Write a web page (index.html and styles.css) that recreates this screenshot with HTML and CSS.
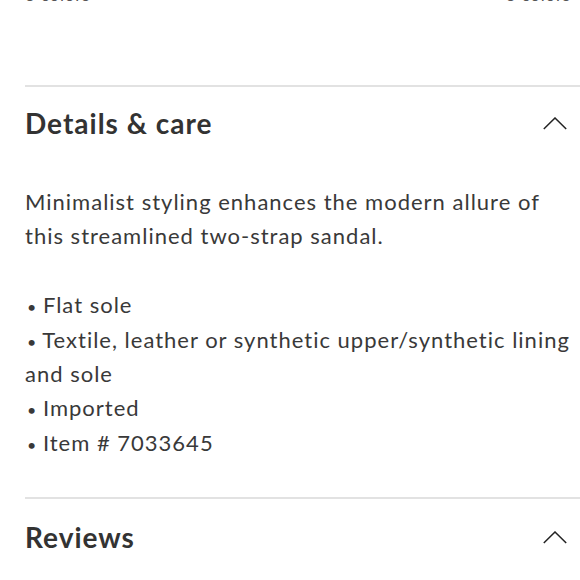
FILE: index.html
```html
<!DOCTYPE html>
<html lang="en">
<head>
<meta charset="utf-8">
<title>Details &amp; care</title>
<link rel="stylesheet" href="styles.css">
</head>
<body>
<div class="page">
  <div class="colors">
    <span>3 colors</span>
    <span>3 colors</span>
  </div>

  <section class="panel panel-details">
    <div class="panel-head">
      <h2 class="panel-title">Details &amp; care</h2>
      <svg class="chev" width="24" height="13" viewBox="0 0 24 13" aria-hidden="true">
        <polyline points="0.8,12 12,1 23.2,12" fill="none" stroke="#222" stroke-width="1.5"/>
      </svg>
    </div>
    <div class="panel-body">
      <p class="desc">Minimalist styling enhances the modern allure of this streamlined two-strap sandal.</p>
      <ul class="facts">
        <li><span class="bullet">•</span> Flat sole</li>
        <li><span class="bullet">•</span> Textile, leather or synthetic upper/synthetic lining and sole</li>
        <li><span class="bullet">•</span> Imported</li>
        <li><span class="bullet">•</span> Item # 7033645</li>
      </ul>
    </div>
  </section>

  <section class="panel panel-reviews">
    <div class="panel-head">
      <h2 class="panel-title">Reviews</h2>
      <svg class="chev" width="24" height="13" viewBox="0 0 24 13" aria-hidden="true">
        <polyline points="0.8,12 12,1 23.2,12" fill="none" stroke="#222" stroke-width="1.5"/>
      </svg>
    </div>
  </section>
</div>
</body>
</html>
```

FILE: styles.css
```css
html, body {
  margin: 0;
  padding: 0;
  background: #ffffff;
}

body {
  font-family: Lato, "Open Sans", sans-serif;
  color: #393939;
  overflow: hidden;
}

.page {
  padding-left: 25px;
}

.colors {
  display: flex;
  justify-content: space-between;
  padding-right: 9px;
  margin-top: -15px;
  font-size: 17px;
  line-height: 20px;
  letter-spacing: 0.8px;
  color: #555;
  height: 20px;
}

.panel {
  border-top: 2px solid #e2e2e2;
}

.panel-details {
  margin-top: 80px;
}

.panel-head {
  display: flex;
  align-items: center;
  justify-content: space-between;
  padding-top: 18px;
  padding-right: 13px;
}

.panel-reviews .panel-head {
  padding-top: 20px;
}

.panel-title {
  margin: 0;
  font-size: 28px;
  line-height: 36px;
  font-weight: 700;
  letter-spacing: 1px;
  color: #333;
}

.chev {
  display: block;
}

.panel-body {
  padding-top: 44px;
  padding-bottom: 37px;
  font-size: 22px;
  line-height: 34.4px;
  letter-spacing: 1px;
}

.desc {
  margin: 0 0 34.4px 0;
}

.facts {
  list-style: none;
  margin: 0;
  padding: 0;
}

.bullet {
  font-size: 16px;
  line-height: 0;
  letter-spacing: 0;
  margin-left: 2px;
}
```
